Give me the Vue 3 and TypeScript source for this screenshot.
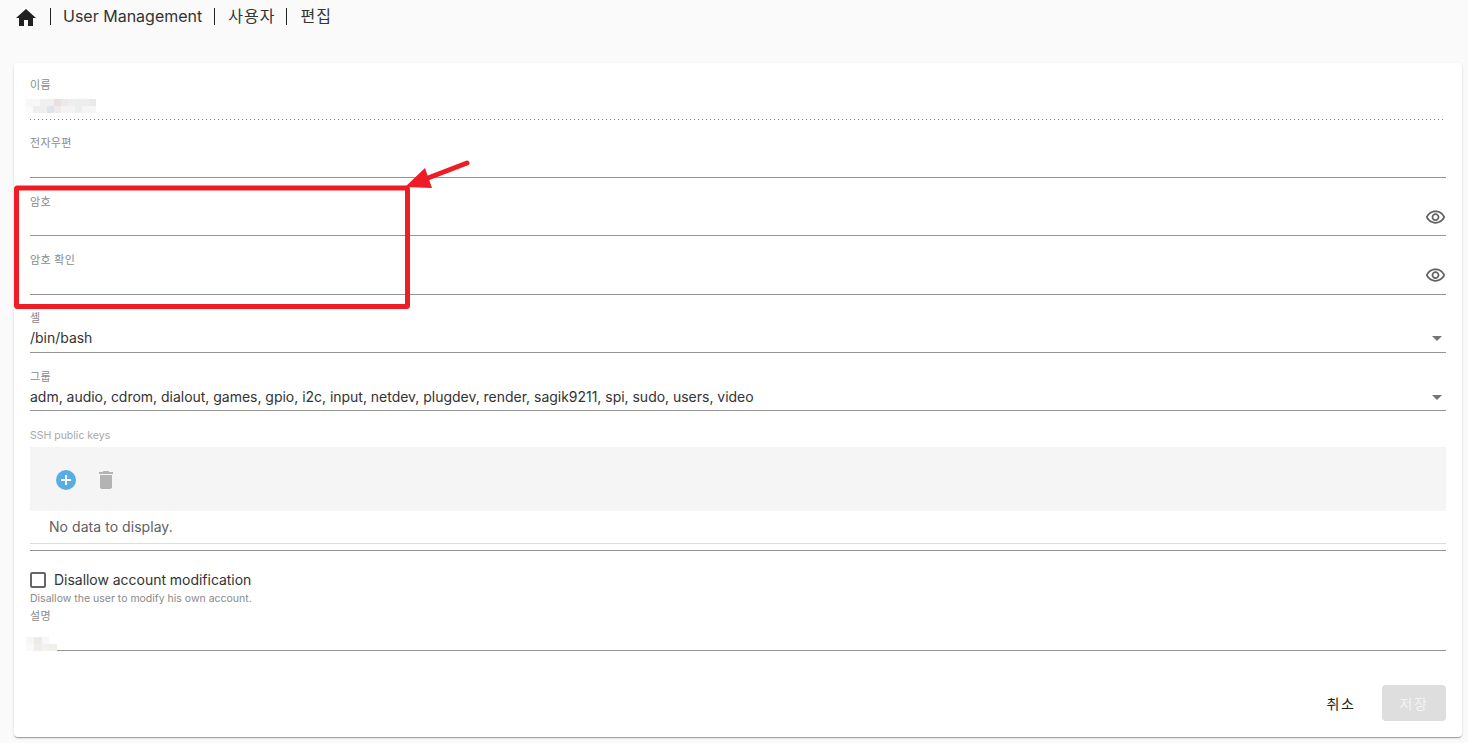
<script setup lang="ts">
interface Field { label: string; value?: string; kind: 'static' | 'text' | 'password' | 'select' }
const fields: Field[] = [
  { label: '이름', kind: 'static' },
  { label: '전자우편', kind: 'text' },
  { label: '암호', kind: 'password' },
  { label: '암호 확인', kind: 'password' },
  { label: '셸', value: '/bin/bash', kind: 'select' },
  { label: '그룹', value: 'adm, audio, cdrom, dialout, games, gpio, i2c, input, netdev, plugdev, render, sagik9211, spi, sudo, users, video', kind: 'select' },
]
const nameBlur = [
  ['#f7f7f7','#f8f8f8','#f0f0f0','#f0f0f0','#e8e0e2','#eee8ea','#eeeeee','#eceeee','#eeeeee','#eae8ec'],
  ['#fafbfb','#eeeeee','#eef0f0','#e0e4e8','#f0eaec','#f4f4f4','#f4f4f4','#eceeee','#f4f6f4','#f6f6f6'],
]
</script>

<template>
  <div class="page">
    <nav class="crumbs">
      <svg class="home" viewBox="0 0 24 24" width="24" height="24"><path d="M10 20v-6h4v6h5v-8h3L12 3 2 12h3v8z" fill="#212121" /></svg>
      <span class="crumb">User Management</span>
      <span class="crumb ko">사용자</span>
      <span class="crumb ko">편집</span>
    </nav>

    <main class="card">
      <div v-for="f in fields" :key="f.label" class="field" :class="{ dotted: f.kind === 'static' }">
        <label class="label">{{ f.label }}</label>
        <div class="value">
          <span v-if="f.value">{{ f.value }}</span>
          <div v-if="f.kind === 'static'" class="blur name-blur">
            <div v-for="(row, r) in nameBlur" :key="r" class="blur-row">
              <i v-for="(c, i) in row" :key="i" :style="{ background: c }"></i>
            </div>
          </div>
          <svg v-if="f.kind === 'password'" class="eye" viewBox="0 0 24 24">
            <path fill="#616161" d="M12 6a9.77 9.77 0 0 1 8.82 5.500A9.77 9.77 0 0 1 12 17a9.77 9.77 0 0 1-8.82-5.500A9.77 9.77 0 0 1 12 6m0-2C7 4 2.730 7.110 1 11.500 2.730 15.890 7 19 12 19s9.270-3.110 11-7.500C21.270 7.110 17 4 12 4zm0 5a2.500 2.500 0 0 1 0 5 2.500 2.500 0 0 1 0-5m0-2c-2.480 0-4.500 2.020-4.500 4.500S9.520 16 12 16s4.500-2.020 4.500-4.500S14.480 7 12 7z" />
          </svg>
          <span v-if="f.kind === 'select'" class="caret"></span>
        </div>
      </div>

      <section class="ssh">
        <div class="ssh-label">SSH public keys</div>
        <div class="toolbar">
          <svg viewBox="0 0 24 24" width="24" height="24"><path fill="#58ade2" d="M12 2a10 10 0 1 0 0 20 10 10 0 0 0 0-20z" /><path fill="#fff" d="M17 13h-4v4h-2v-4H7v-2h4V7h2v4h4z" /></svg>
          <svg viewBox="0 0 24 24" width="24" height="24"><path fill="#b3b3b3" d="M6 19c0 1.100.9 2 2 2h8c1.100 0 2-.9 2-2V7H6v12zM19 4h-3.500l-1-1h-5l-1 1H5v2h14V4z" /></svg>
        </div>
        <div class="empty">No data to display.</div>
        <div class="ssh-end"></div>
      </section>

      <label class="check">
        <span class="box"></span>
        <span class="check-text">Disallow account modification</span>
      </label>
      <div class="hint">Disallow the user to modify his own account.</div>

      <div class="desc">
        <label class="label">설명</label>
        <div class="blur desc-blur">
          <div class="blur-row"><i style="background:#f6f6f4"></i><i style="background:#eeeae6"></i><i style="background:#f6f8fc"></i><i style="background:#fff"></i></div>
          <div class="blur-row"><i style="background:#f9f9f9"></i><i style="background:#f0eeea"></i><i style="background:#f4f2ee"></i><i style="background:#f1efec"></i></div>
        </div>
      </div>

      <footer class="actions">
        <button class="cancel" type="button">취소</button>
        <button class="save" type="button" disabled>저장</button>
      </footer>
    </main>

    <svg class="annotation" width="1468" height="743" viewBox="0 0 1468 743">
      <rect x="16.500" y="188" width="391" height="118.500" rx="1" fill="none" stroke="#ee1c25" stroke-width="5" />
      <path d="M467 163 L428 178" stroke="#ee1c25" stroke-width="5" stroke-linecap="round" fill="none" />
      <path d="M405 187 L425 168 L432 188 Z" fill="#ee1c25" />
    </svg>
  </div>
</template>

<style>
html, body { margin: 0; background: #fafafa; }
</style>

<style scoped>
.page {
  position: relative;
  width: 1468px;
  height: 743px;
  overflow: hidden;
  background: #fafafa;
  font-family: Inter, "Noto Sans CJK KR", sans-serif;
  color: #212121;
}
.crumbs {
  height: 33px;
  padding: 0 0 30px 14px;
  display: flex;
  align-items: center;
  font-size: 16px;
}
.home { flex: none; margin-top: 3px; }
.crumb {
  margin-left: 12px;
  padding-left: 12px;
  border-left: 1px solid #212121;
  height: 17px;
  line-height: 16px;
  color: #333;
}
.crumb.ko { letter-spacing: 1px; margin-right: -1px; padding-left: 13px; }
.card {
  margin: 0 6px 0 14px;
  height: 674px;
  box-sizing: border-box;
  padding: 0 16px;
  background: #fff;
  border-radius: 4px;
  box-shadow: 0 2px 1px -1px rgba(0, 0, 0, .2), 0 1px 1px rgba(0, 0, 0, .14), 0 1px 3px rgba(0, 0, 0, .12);
}
.field {
  height: 58.300px;
  box-sizing: border-box;
  border-bottom: 1px solid #949494;
  padding-top: 16.700px;
}
.field:first-child {
  height: 56.700px;
  padding-top: 15.400px;
}
.field.dotted {
  border-bottom: 0;
  background: repeating-linear-gradient(to right, #808080 0 1px, transparent 1px 4px) left bottom / 1413px 1px no-repeat;
}
.label {
  display: block;
  font-size: 11px;
  line-height: 14px;
  letter-spacing: .3px;
  color: #8a8a8a;
}
.value {
  position: relative;
  height: 20px;
  margin-top: 3px;
  font-size: 14px;
  line-height: 20px;
  letter-spacing: -.02px;
  color: #333;
}
.blur { position: absolute; }
.blur-row { display: flex; height: 7px; }
.blur-row i { display: block; flex: 1; }
.name-blur { left: -4px; top: 3.600px; width: 70px; }
.eye {
  position: absolute;
  right: 0;
  top: -5px;
  width: 21px;
  height: 21px;
}
.caret {
  position: absolute;
  right: 4px;
  top: 8px;
  width: 0;
  height: 0;
  border-left: 5px solid transparent;
  border-right: 5px solid transparent;
  border-top: 5px solid #757575;
}
.ssh { padding-top: 18px; }
.ssh-label {
  font-size: 10.500px;
  line-height: 14px;
  color: #a8a8a8;
}
.toolbar {
  margin-top: 4px;
  height: 64px;
  box-sizing: border-box;
  padding-top: 2px;
  background: #f5f5f5;
  display: flex;
  align-items: center;
  gap: 16px;
  padding-left: 24px;
}
.empty {
  height: 33px;
  box-sizing: border-box;
  padding-left: 19px;
  font-size: 14px;
  line-height: 31px;
  letter-spacing: .05px;
  color: #616161;
  border-bottom: 1px solid #ddd;
}
.ssh-end { height: 6px; border-bottom: 1px solid #949494; }
.check {
  display: flex;
  align-items: center;
  margin-top: 20px;
  height: 18px;
  font-size: 14px;
  letter-spacing: -.03px;
  color: #333;
}
.check-text { margin-bottom: 2px; }
.box {
  width: 12px;
  height: 12px;
  border: 2px solid #666;
  border-radius: 2px;
  margin-right: 8px;
}
.hint {
  margin-top: 3px;
  font-size: 10.500px;
  line-height: 14px;
  color: #8a8a8a;
}
.desc {
  position: relative;
  margin-top: 3px;
  height: 42px;
  box-sizing: border-box;
  border-bottom: 1px solid #949494;
}
.desc-blur { left: -4px; bottom: -1px; width: 31px; height: 14px; }
.actions {
  display: flex;
  justify-content: flex-end;
  align-items: center;
  margin-top: 34px;
  gap: 10px;
}
.actions button {
  font: inherit;
  font-size: 14px;
  letter-spacing: 1.500px;
  height: 36px;
  border: 0;
  border-radius: 4px;
  padding: 0;
}
.cancel { width: 64px; background: none; color: #212121; padding-left: 2px !important; }
.save { width: 64px; background: #dedede; color: #f3f3f3; }
.annotation {
  position: absolute;
  left: 0;
  top: 0;
  pointer-events: none;
}
</style>
